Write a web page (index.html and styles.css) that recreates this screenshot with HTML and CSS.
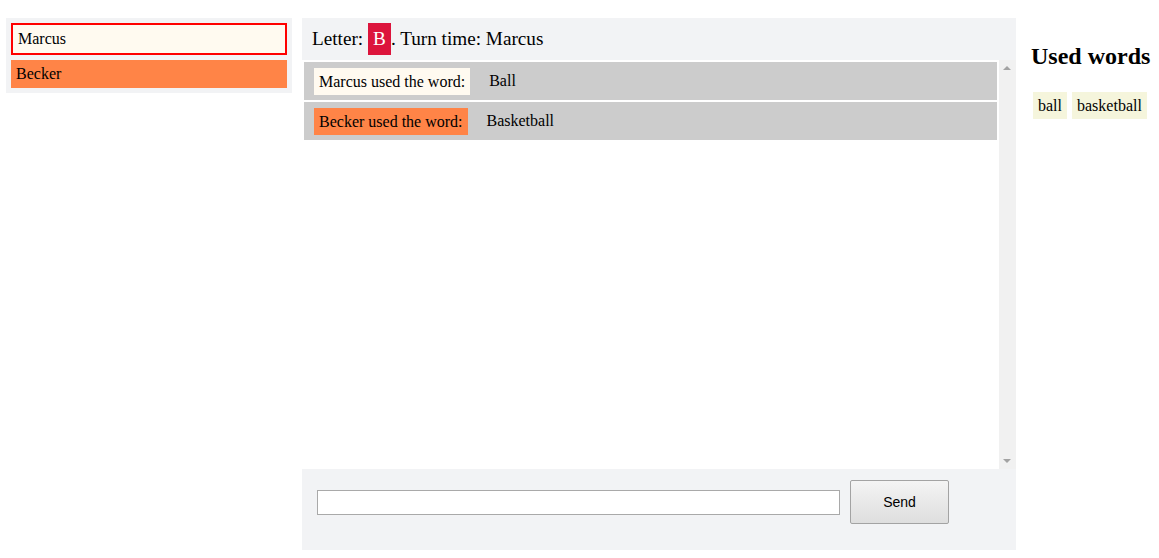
FILE: index.html
```html
<!DOCTYPE html>
<html>
<head>
<meta charset="utf-8">
<link rel="stylesheet" href="styles.css">
</head>
<body>
<div class="page">
  <div class="players">
    <div class="player active">Marcus</div>
    <div class="player orange">Becker</div>
  </div>
  <div class="game">
    <div class="header">Letter:&nbsp;<span class="letter">B</span>. Turn time: Marcus</div>
    <div class="messages">
      <div class="list">
        <div class="row"><span class="label white">Marcus used the word:</span><span class="word">Ball</span></div>
        <div class="row"><span class="label orange">Becker used the word:</span><span class="word">Basketball</span></div>
      </div>
      <div class="scrollbar">
        <span class="arrow up"></span>
        <span class="arrow down"></span>
      </div>
    </div>
    <div class="composer">
      <input class="field" type="text">
      <button class="send">Send</button>
    </div>
  </div>
  <div class="used">
    <h2 class="title">Used words</h2>
    <div class="tags">
      <span class="tag">ball</span>
      <span class="tag">basketball</span>
    </div>
  </div>
</div>
</body>
</html>
```
FILE: styles.css
```css
html, body {
  margin: 0;
  padding: 0;
  background: #ffffff;
  font-family: "Liberation Serif", "Times New Roman", serif;
  color: #000;
}
.page {
  display: flex;
  align-items: flex-start;
  padding: 18px 0 0 6px;
}
.players {
  width: 276px;
  padding: 5px;
  background: #f2f3f5;
  display: flex;
  flex-direction: column;
  gap: 5px;
}
.player {
  height: 28px;
  padding: 0 5px;
  font-size: 16px;
  line-height: 28px;
}
.player.active {
  background: #fffaf0;
  border: 2px solid #ff0000;
  padding: 0 5px;
}
.player.orange {
  background: #ff8447;
}
.game {
  margin-left: 10px;
  width: 714px;
  height: 532px;
  background: #f2f3f5;
  display: flex;
  flex-direction: column;
}
.header {
  height: 42px;
  padding-left: 10px;
  font-size: 19.2px;
  display: flex;
  align-items: center;
}
.letter {
  display: inline-block;
  background: #dc143c;
  color: #fff;
  width: 23px;
  height: 32px;
  line-height: 32px;
  text-align: center;
}
.messages {
  height: 409px;
  background: #fff;
  display: flex;
}
.list {
  flex: 1;
  padding: 2px;
  display: flex;
  flex-direction: column;
  gap: 2px;
}
.row {
  height: 38px;
  background: #cccccc;
  padding: 0 10px;
  display: flex;
  align-items: center;
  font-size: 16px;
}
.label {
  padding: 0 5px;
  height: 27px;
  line-height: 27px;
  margin-right: 19px;
}
.label.white { background: #fffaf0; }
.label.orange { background: #ff8447; }
.scrollbar {
  width: 17px;
  background: #f1f1f1;
  position: relative;
}
.arrow {
  position: absolute;
  left: 4px;
  width: 0;
  height: 0;
  border-left: 4px solid transparent;
  border-right: 4px solid transparent;
}
.arrow.up {
  top: 6px;
  border-bottom: 4px solid #a3a3a3;
}
.arrow.down {
  bottom: 6px;
  border-top: 4px solid #a3a3a3;
}
.composer {
  height: 44px;
  padding: 11px 0 26px 15px;
  display: flex;
  align-items: center;
}
.field {
  width: 519px;
  height: 21px;
  border: 1px solid #a9a9a9;
  padding: 1px;
  margin: 0;
  background: #fff;
  box-sizing: content-box;
}
.send {
  margin: 0 0 0 10px;
  width: 99px;
  height: 44px;
  border: 1px solid #a3a3a3;
  border-radius: 2px;
  background: linear-gradient(#f4f4f4, #dedede);
  font-family: "Liberation Sans", Arial, sans-serif;
  font-size: 14px;
  color: #000;
}
.used {
  margin-left: 15px;
}
.title {
  font-size: 24px;
  font-weight: bold;
  margin: 24px 0 0 0;
  line-height: 28px;
}
.tags {
  display: flex;
  gap: 5px;
  margin: 22px 0 0 2px;
}
.tag {
  background: #f5f5dc;
  height: 27px;
  line-height: 27px;
  padding: 0 5px;
  font-size: 16px;
}
```
